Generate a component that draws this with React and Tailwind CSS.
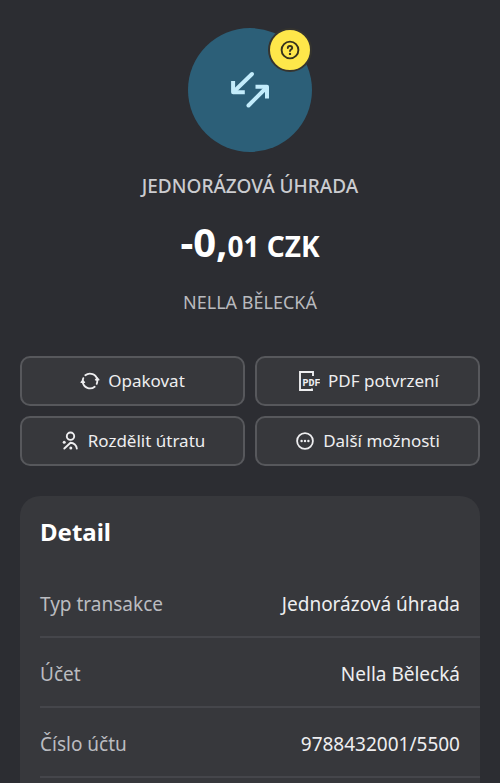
import React from 'react';

const details = [
	{ label: "Typ transakce", value: "Jednorázová úhrada" },
	{ label: "Účet", value: "Nella Bělecká" },
	{ label: "Číslo účtu", value: "9788432001/5500" },
];

const TransferIcon = () => (
	<svg viewBox="0 0 40 40" className="w-10 h-10" fill="none" stroke="#c3ecfb" strokeWidth="4" strokeLinejoin="round" aria-hidden="true">
		<path d="M22 4 4.500 21" strokeLinecap="round" />
		<path d="M3.100 11V22.300H14.800" />
		<path d="M18.500 35.500 36 18" strokeLinecap="round" />
		<path d="M25.500 16.800H37V28.500" />
	</svg>
);

const HelpIcon = () => (
	<svg viewBox="0 0 20 20" className="w-5 h-5" fill="none" stroke="#35321d" strokeWidth="1.900" strokeLinecap="round" aria-hidden="true">
		<circle cx="10" cy="10" r="8.400" />
		<path d="M7.800 8C7.800 6.700 8.700 6 10 6s2.200.8 2.200 2c0 1.500-2.200 1.500-2.200 3" />
		<circle cx="10" cy="13.900" r="1.200" fill="#35321d" stroke="none" />
	</svg>
);

const RepeatIcon = () => (
	<svg viewBox="0 0 20 20" className="w-5 h-5" fill="none" stroke="currentColor" strokeWidth="1.800" strokeLinecap="round" strokeLinejoin="round" aria-hidden="true">
		<path d="M5.300 4.300A7.400 7.400 0 0 1 17.300 9" />
		<path d="M2.700 10.500A7.400 7.400 0 0 1 3.300 7.200" />
		<path d="M14.700 15.700A7.400 7.400 0 0 1 2.700 11" />
		<path d="M17.300 9.500A7.400 7.400 0 0 1 16.700 12.800" />
		<path d="M1 11.300 2.700 9.300 4.600 11.300Z" fill="currentColor" strokeWidth="1.200" />
		<path d="M15.400 8.800 17.300 6.800 19 8.800Z" fill="currentColor" strokeWidth="1.200" />
	</svg>
);

const PdfIcon = () => (
	<svg viewBox="0 0 24 24" className="w-6 h-6" fill="none" stroke="currentColor" strokeWidth="1.900" aria-hidden="true">
		<path d="M17 7V3H4v18h12v-1.500" />
		<text x="6.500" y="17.300" fontSize="10" fontWeight="700" fontFamily="Liberation Mono, monospace" fill="currentColor" stroke="none">
			PDF
		</text>
	</svg>
);

const SplitIcon = () => (
	<svg viewBox="0 0 20 20" className="w-5 h-5" fill="none" stroke="currentColor" strokeWidth="1.900" strokeLinecap="round" aria-hidden="true">
		<circle cx="10.500" cy="5.200" r="3.700" />
		<path d="M4.300 17.500 10.500 11.700c3.400.2 6 2.600 6.300 5.800" />
		<circle cx="4.200" cy="11.200" r="1.500" fill="currentColor" stroke="none" />
		<circle cx="10.800" cy="17" r="1.500" fill="currentColor" stroke="none" />
	</svg>
);

const MoreIcon = () => (
	<svg viewBox="0 0 20 20" className="w-5 h-5" fill="none" stroke="currentColor" strokeWidth="1.800" aria-hidden="true">
		<circle cx="10" cy="10" r="7.900" />
		<g fill="currentColor" stroke="none">
			<circle cx="6.600" cy="10" r="1.200" />
			<circle cx="10" cy="10" r="1.200" />
			<circle cx="13.400" cy="10" r="1.200" />
		</g>
	</svg>
);

const actions = [
	{ label: "Opakovat", Icon: RepeatIcon },
	{ label: "PDF potvrzení", Icon: PdfIcon },
	{ label: "Rozdělit útratu", Icon: SplitIcon },
	{ label: "Další možnosti", Icon: MoreIcon },
];

const App = () => {
	return (
		<main className="min-h-screen flex flex-col bg-[#2c2d32] px-5 pt-7 text-[#eeeef0] font-['Noto_Sans',sans-serif]">
			<header className="flex flex-col items-center text-center">
				<div className="relative w-31 h-31 rounded-full bg-[#2c5f78] flex items-center justify-center">
					<TransferIcon />
					<button
						type="button"
						aria-label="Nápověda"
						className="absolute top-0 right-0 w-11 h-11 rounded-full bg-[#fee74a] border-2 border-[#35342f] flex items-center justify-center cursor-pointer"
					>
						<HelpIcon />
					</button>
				</div>

				<p className="mt-5 text-[19px] leading-7 font-medium text-[#cbccd0]">JEDNORÁZOVÁ ÚHRADA</p>
				<h1 className="mt-[18px] text-[28px] leading-12 font-bold text-white">
					<span className="text-[40px]">-0,</span>01 CZK
				</h1>
				<p className="mt-[18px] text-lg leading-7 text-[#b9babe]">NELLA BĚLECKÁ</p>
			</header>

			<div className="mt-10 grid grid-cols-2 gap-[10px]">
				{actions.map(({ label, Icon }) => (
					<button
						key={label}
						type="button"
						className="h-[50px] flex items-center justify-center gap-2 rounded-[10px] border-2 border-[#57585c] bg-[#37383c] text-[17px] cursor-pointer"
					>
						<Icon />
						{label}
					</button>
				))}
			</div>

			<section className="mt-[30px] flex-1 rounded-t-[20px] bg-[#37383c] pl-5 pt-5">
				<h2 className="text-2xl leading-8 font-bold text-white">Detail</h2>
				<dl className="mt-5">
					{details.map(({ label, value }) => (
						<div
							key={label}
							className="h-[70px] pr-5 pt-1 flex items-center justify-between border-b-2 border-[#45464b] text-[19px]"
						>
							<dt className="text-[#bbbcc0]">{label}</dt>
							<dd>{value}</dd>
						</div>
					))}
				</dl>
			</section>
		</main>
	);
};

export default App;
